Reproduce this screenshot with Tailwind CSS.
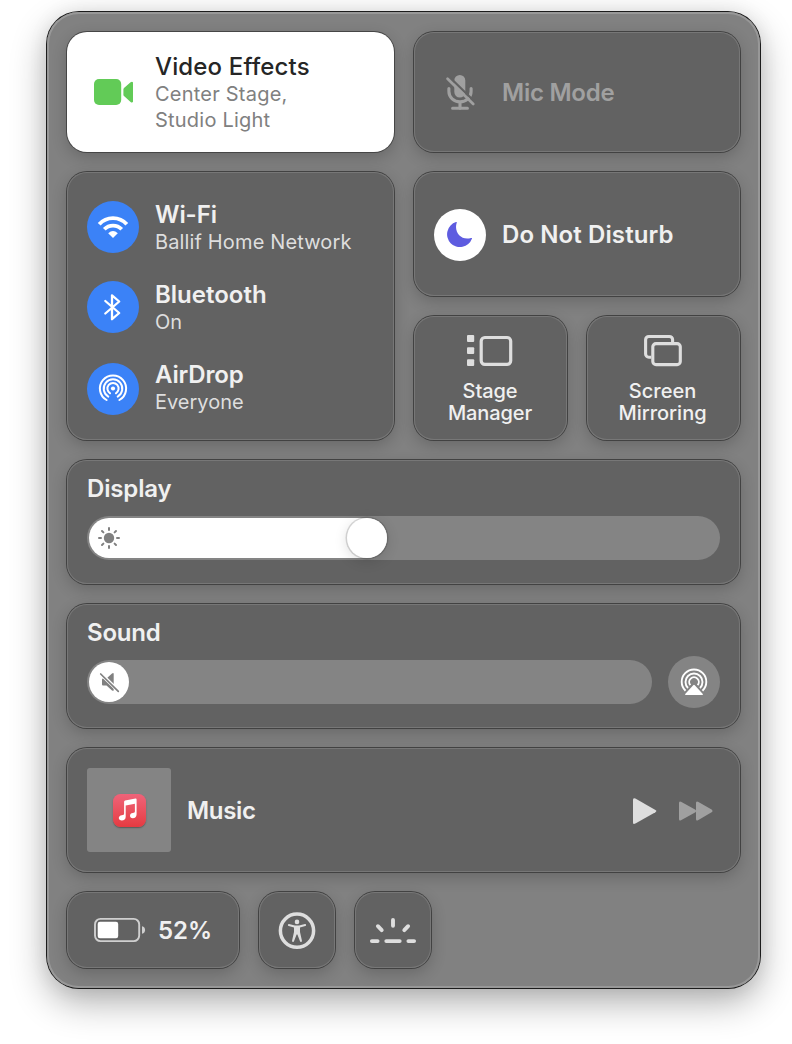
<!DOCTYPE html>
<html lang="en">
<head>
<meta charset="utf-8">
<title>Control Center</title>
<script src="https://cdn.jsdelivr.net/npm/@tailwindcss/browser@4"></script>
</head>
<body class="bg-white font-['Inter',sans-serif] text-[#f0f0f0]">
<div class="h-[1044px] w-[792px] overflow-hidden pl-[47px] pt-3">
<main class="flex h-[976px] w-[713px] flex-col gap-5 rounded-[32px] bg-[#818181] p-5 shadow-[0_0_0_1px_#1c1c1c,inset_0_0_0_2px_#989898,0_14px_36px_rgba(0,0,0,0.32),0_0_20px_rgba(0,0,0,0.08)]">

  <!-- Video effects and mic mode -->
  <section class="grid h-[120px] shrink-0 grid-cols-[327px_326px] gap-5">
    <div class="flex items-center gap-4 rounded-[20px] bg-white px-5 shadow-[0_0_0_1px_#464646,0_5px_16px_rgba(0,0,0,0.2)]">
      <div class="flex w-[52px] justify-center">
        <svg width="40" height="28" viewBox="93 78 40 28" fill="#62cb57"><rect x="94" y="79" width="27.2" height="26" rx="5"/><path d="M123.400 89.500Q123.400 88.700 124 88.100L130.600 82.200C131.800 81.200 133.100 81.600 133.100 83V101.200C133.100 102.600 131.800 102.900 130.600 102L124 96.100Q123.400 95.600 123.400 94.800Z"/></svg>
      </div>
      <div class="pt-[2px]">
        <h2 class="text-2xl leading-7 font-medium tracking-[0.15px] text-[#262626]">Video Effects</h2>
        <p class="text-[20px] leading-[26px] tracking-[0.22px] text-[#808080]">Center Stage,<br>Studio Light</p>
      </div>
    </div>
    <div class="flex items-center gap-4 rounded-[20px] bg-[#626262] px-5 shadow-[0_0_0_1px_#424242,inset_0_0_0_1px_#777777,0_5px_16px_rgba(0,0,0,0.2)]">
      <div class="flex w-[52px] justify-center">
        <svg width="30" height="38" viewBox="445 73 30 38" fill="none" stroke-linecap="round">
          <rect x="454.300" y="75" width="11" height="22.500" rx="5.500" fill="#a0a0a0"/>
          <path d="M448.900 88.500V91.500A11.100 10.300 0 0 0 471.100 91.500V88.500M460 102V108.500M452.600 108.300H467.400" stroke="#a0a0a0" stroke-width="3.100"/>
          <path d="M449.200 76.900L476 103" stroke="#626262" stroke-width="2.200"/>
          <path d="M447.600 78.800L473.200 104" stroke="#a0a0a0" stroke-width="2.700"/>
        </svg>
      </div>
      <h2 class="pt-[2px] text-2xl leading-7 font-semibold tracking-[-0.25px] text-[#a0a0a0]">Mic Mode</h2>
    </div>
  </section>

  <!-- Connectivity, focus and display shortcuts -->
  <section class="grid h-[268px] shrink-0 grid-cols-[327px_326px] gap-5">
    <div class="flex flex-col gap-[26px] rounded-[20px] bg-[#626262] px-5 pt-7 shadow-[0_0_0_1px_#424242,inset_0_0_0_1px_#777777,0_5px_16px_rgba(0,0,0,0.2)]">
      <div class="flex h-[54px] gap-4">
        <div class="mt-px size-[52px] shrink-0 rounded-full bg-[#3b82f7]">
          <svg width="52" height="52" viewBox="87 201 52 52" fill="none" stroke="white"><path d="M99.200 224.300A18.500 18.500 0 0 1 126.800 224.300" stroke-width="3.800"/><path d="M104.300 229.300A12 12 0 0 1 121.700 229.300" stroke-width="3.800"/><path d="M108.200 233.300Q113 228.800 117.800 233.300L113 238Z" fill="white" stroke="none"/></svg>
        </div>
        <div class="pt-px">
          <h2 class="text-2xl leading-7 font-semibold tracking-[-0.1px]">Wi-Fi</h2>
          <p class="text-[20px] leading-[26px] tracking-[0.14px] whitespace-nowrap text-[#dedede]">Ballif Home Network</p>
        </div>
      </div>
      <div class="flex h-[54px] gap-4">
        <div class="mt-px size-[52px] shrink-0 rounded-full bg-[#3b82f7]">
          <svg width="52" height="52" viewBox="87 281 52 52" fill="none" stroke="white" stroke-width="2.300" stroke-linejoin="round" stroke-linecap="round"><path d="M105.300 301L119.200 313L112 319.200V295.300L119.200 301.500L105.300 313.500"/></svg>
        </div>
        <div class="pt-px">
          <h2 class="text-2xl leading-7 font-semibold">Bluetooth</h2>
          <p class="text-[20px] leading-[26px] text-[#dedede]">On</p>
        </div>
      </div>
      <div class="flex h-[54px] gap-4">
        <div class="mt-[3px] size-[52px] shrink-0 rounded-full bg-[#3b82f7]">
          <svg width="52" height="52" viewBox="-26 -26 52 52" fill="none" stroke="white" stroke-width="2" stroke-linecap="round"><circle r="2.100" cy="-.500" fill="white" stroke="none"/><path d="M-2.900 4.300A5.600 5.600 0 1 1 2.900 4.300M-4.700 7.600A9.300 9.300 0 1 1 4.700 7.600M-6.400 11A13.100 13.100 0 1 1 6.400 11"/></svg>
        </div>
        <div class="pt-px">
          <h2 class="text-2xl leading-7 font-semibold tracking-[-0.15px]">AirDrop</h2>
          <p class="text-[20px] leading-[26px] text-[#dedede]">Everyone</p>
        </div>
      </div>
    </div>
    <div class="flex flex-col gap-5">
      <div class="flex h-[124px] items-center gap-4 rounded-[20px] bg-[#626262] px-5 shadow-[0_0_0_1px_#424242,inset_0_0_0_1px_#777777,0_5px_16px_rgba(0,0,0,0.2)]">
        <div class="mt-[2px] size-[52px] shrink-0 rounded-full bg-white">
          <svg width="52" height="52" viewBox="434 209 52 52"><path d="M456 222.100C456.600 221.800 457 222 456.700 222.800C453.600 232.500 461.500 241 471 238C471.900 237.700 472.200 238.100 471.900 238.700A12.800 12.800 0 1 1 456 222.100Z" fill="#5e5ce0"/></svg>
        </div>
        <h2 class="pt-[2px] text-2xl leading-7 font-semibold tracking-[0.1px]">Do Not Disturb</h2>
      </div>
      <div class="grid h-[124px] grid-cols-2 gap-5">
        <div class="flex flex-col items-center rounded-[20px] bg-[#626262] pt-[18px] shadow-[0_0_0_1px_#424242,inset_0_0_0_1px_#777777,0_5px_16px_rgba(0,0,0,0.2)]">
          <svg width="47" height="33" viewBox="467 334 47 33" fill="#dedede"><rect x="467" y="335" width="7.200" height="6.900" rx="1"/><rect x="467" y="347.200" width="7.200" height="6.900" rx="1"/><rect x="467" y="359.200" width="7.200" height="6.900" rx="1"/><rect x="481.200" y="337.500" width="29.500" height="26.800" rx="3.600" fill="none" stroke="#dedede" stroke-width="3.200"/></svg>
          <p class="mt-[13px] pr-px text-center text-[20px] leading-[22px] font-medium tracking-[-0.1px]">Stage<br>Manager</p>
        </div>
        <div class="flex flex-col items-center rounded-[20px] bg-[#626262] pt-[18px] shadow-[0_0_0_1px_#424242,inset_0_0_0_1px_#777777,0_5px_16px_rgba(0,0,0,0.2)]">
          <svg width="39" height="33" viewBox="644 334 39 33" fill="none" stroke="#dedede" stroke-width="3.100"><path d="M651.200 357.200H648.800A3.200 3.200 0 0 1 645.600 354V339.700A3.200 3.200 0 0 1 648.800 336.500H669.400A3.200 3.200 0 0 1 672.600 339.700V342"/><rect x="652.800" y="343.600" width="27.500" height="21" rx="3.200"/></svg>
          <p class="mt-[13px] pr-[2px] text-center text-[20px] leading-[22px] font-medium">Screen<br>Mirroring</p>
        </div>
      </div>
    </div>
  </section>

  <!-- Display brightness -->
  <section class="flex h-[124px] shrink-0 flex-col rounded-[20px] bg-[#626262] px-5 pt-[15px] shadow-[0_0_0_1px_#424242,inset_0_0_0_1px_#777777,0_5px_16px_rgba(0,0,0,0.2)]">
    <h2 class="text-2xl leading-7 font-semibold tracking-[-0.15px]">Display</h2>
    <div class="mt-[13px] flex h-11 rounded-full bg-[#848484] p-[2px]">
      <div class="flex h-10 w-[298px] items-center justify-between rounded-full bg-white pl-2">
        <svg width="24" height="24" viewBox="-12 -12 24 24" stroke="#808080" stroke-width="2" stroke-linecap="round"><circle r="5.200" fill="#808080" stroke="none"/><path d="M0-8V-10M0 8V10M8 0H10M-8 0H-10M5.600-5.600L7-7M-5.600-5.600L-7-7M5.600 5.600L7 7M-5.600 5.600L-7 7"/></svg>
        <div class="size-10 rounded-full bg-white shadow-[0_0_0_1.500px_rgba(0,0,0,0.14),0_3px_14px_rgba(0,0,0,0.14)]"></div>
      </div>
    </div>
  </section>

  <!-- Sound volume -->
  <section class="flex h-[124px] shrink-0 flex-col rounded-[20px] bg-[#626262] px-5 pt-[15px] shadow-[0_0_0_1px_#424242,inset_0_0_0_1px_#777777,0_5px_16px_rgba(0,0,0,0.2)]">
    <h2 class="text-2xl leading-7 font-semibold tracking-[-0.2px]">Sound</h2>
    <div class="mt-[9px] flex items-center gap-4">
      <div class="flex h-11 flex-1 rounded-full bg-[#848484] p-[2px]">
        <div class="size-10 rounded-full bg-white">
          <svg width="40" height="40" viewBox="89 662 40 40"><path d="M102 679.500Q102 678.600 103 678.600H106.500L112 673.600Q113.700 672.300 113.700 674.200V690Q113.700 691.500 112 690.400L106.500 685.600H103Q102 685.600 102 684.600Z" fill="#808080"/><path d="M100.500 673.500L119.500 692" stroke="white" stroke-width="3.800"/><path d="M100.700 674L118.300 691.300" stroke="#808080" stroke-width="1.700" stroke-linecap="round"/></svg>
        </div>
      </div>
      <div class="size-[52px] rounded-full bg-[#848484]">
        <svg width="52" height="52" viewBox="-26 -26 52 52" fill="none" stroke="white" stroke-width="1.900"><path d="M-3.600 3.200A4.800 4.800 0 1 1 3.600 3.200M-6 6A8.500 8.500 0 1 1 6 6M-8.500 8.700A12.300 12.300 0 1 1 8.500 8.700"/><path d="M-.800 3.200Q0 2.300 .800 3.200L8.800 12Q9.300 13 8.300 13H-8.300Q-9.300 13-8.800 12Z" fill="white" stroke="none"/></svg>
      </div>
    </div>
  </section>

  <!-- Now playing -->
  <section class="flex h-[124px] shrink-0 items-center rounded-[20px] bg-[#626262] px-5 shadow-[0_0_0_1px_#424242,inset_0_0_0_1px_#777777,0_5px_16px_rgba(0,0,0,0.2)]">
    <div class="flex size-[84px] items-center justify-center rounded-[3px] bg-[#848484]">
      <div class="h-[33px] w-[33px] rounded-[7.500px] bg-linear-to-b from-[#ef6379] to-[#e53a41] shadow-[0_1px_1.500px_rgba(0,0,0,0.35)]">
        <svg width="33" height="33" viewBox="0.500 0.500 33 33" fill="white"><path d="M11.600 8.200Q11.600 7.200 12.600 7L23 5Q24.100 4.800 24.100 5.900V20.800C24.100 23.300 22.500 24.700 20.300 24.700C18.500 24.700 17.500 23.600 17.500 22.300C17.500 20.500 18.600 19.800 20.200 19.500C21.900 19.200 22.400 19 22.400 17.800V10.200L13.200 12V23.200C13.200 25.700 11.600 27 9.300 27C7.500 27 6.300 26 6.300 24.600C6.300 22.900 7.600 22.100 9.200 21.800C11.100 21.500 11.600 21.200 11.600 20Z"/></svg>
      </div>
    </div>
    <h2 class="ml-4 flex-1 pt-[2px] text-2xl leading-7 font-semibold tracking-[-0.35px]">Music</h2>
    <div class="flex items-center gap-[22px] pt-px pr-[7px]">
      <svg width="24" height="28" viewBox="0 0 24 28" fill="#dedede"><path d="M0 2.800Q0 .300 2.400 1.600L22.400 12.900Q24.300 14.100 22.400 15.300L2.400 26.600Q0 27.900 0 25.400Z"/></svg>
      <svg width="34" height="22" viewBox="0 0 34 22" fill="#a0a0a0"><path d="M0 3Q0 .800 2 1.800L15.600 9.200Q16.600 9.700 17 10.500V3Q17 .800 19 1.800L32.600 9.600Q34.400 11 32.600 12.200L19 20.200Q17 21.200 17 19V11.500Q16.600 12.200 15.600 12.800L2 20.200Q0 21.200 0 19Z"/></svg>
    </div>
  </section>

  <!-- Battery, accessibility, keyboard brightness -->
  <section class="flex h-[76px] shrink-0 gap-5">
    <div class="flex w-[172px] items-center rounded-[20px] bg-[#626262] pl-[26px] shadow-[0_0_0_1px_#424242,inset_0_0_0_1px_#777777,0_5px_16px_rgba(0,0,0,0.2)]">
      <svg width="53" height="26" viewBox="93 917 53 26"><rect x="95" y="918.900" width="44.200" height="22.200" rx="5.500" fill="none" stroke="#cfcfcf" stroke-width="1.900"/><rect x="97.700" y="921.700" width="20.500" height="16.600" rx="2.200" fill="white"/><path d="M142 926.200Q145.100 927 145.100 930T142 933.800Z" fill="#cfcfcf"/></svg>
      <span class="ml-3 pt-[2px] text-2xl leading-7 font-semibold">52%</span>
    </div>
    <div class="flex w-[76px] items-center justify-center rounded-[20px] bg-[#626262] shadow-[0_0_0_1px_#424242,inset_0_0_0_1px_#777777,0_5px_16px_rgba(0,0,0,0.2)]">
      <svg width="40" height="40" viewBox="277 910 40 40" fill="#dedede"><circle cx="297" cy="930.700" r="16.600" fill="none" stroke="#dedede" stroke-width="3.500"/><circle cx="297" cy="921.900" r="2.300"/><path d="M289 924.100L295 925.400H299L305 924.100Q306.100 924 306.100 925T305.300 926L300 927.500V932L301.900 940.600Q302.100 941.800 301.200 942T300 941.200L297.400 934.500H296.600L294 941.200Q293.700 942.200 292.800 942T292.100 940.600L294 932V927.500L288.700 926Q287.900 925.800 287.900 925T289 924.100Z"/></svg>
    </div>
    <div class="flex w-[76px] items-center justify-center rounded-[20px] bg-[#626262] shadow-[0_0_0_1px_#424242,inset_0_0_0_1px_#777777,0_5px_16px_rgba(0,0,0,0.2)]">
      <svg width="48" height="30" viewBox="369 915 48 30" stroke="#dedede" stroke-width="3.900" stroke-linecap="round"><path d="M371.900 941.100H377.600M386.300 941.100H399.700M408.400 941.100H414.100M393 920V925.800M377.900 926.200L381.700 930.100M408.100 926.200L404.300 930.100"/></svg>
    </div>
  </section>
</main>
</div>
</body>
</html>
